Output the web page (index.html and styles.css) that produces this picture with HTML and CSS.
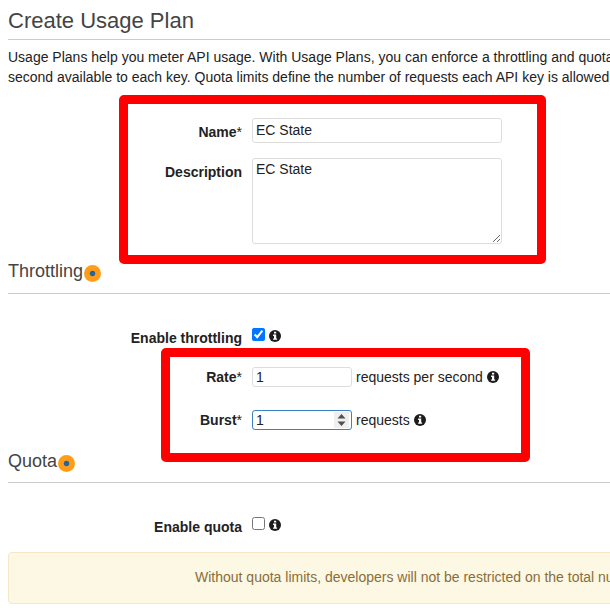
FILE: index.html
```html
<!DOCTYPE html>
<html lang="en">
<head>
<meta charset="utf-8">
<title>Create Usage Plan</title>
<link rel="stylesheet" href="styles.css">
</head>
<body>
<svg class="defs" width="0" height="0" aria-hidden="true">
  <symbol id="info" viewBox="0 0 12 12">
    <circle cx="6" cy="6" r="6" fill="#1c1c1c"/>
    <path d="M5 1.8h2.2v1.7H5zM4.1 4.5h3.1v3.9h.9v1.4H4.1V8.4H5V5.9h-.9z" fill="#fff"/>
  </symbol>
</svg>
<main class="page">
  <h1 class="title">Create Usage Plan</h1>
  <p class="intro">Usage Plans help you meter API usage. With Usage Plans, you can enforce a throttling and quota<br>second available to each key. Quota limits define the number of requests each API key is allowed</p>

  <div class="row row-name">
    <label class="label" for="name">Name<span class="req">*</span></label>
    <input class="field wide" id="name" type="text" value="EC State">
  </div>
  <div class="row row-description">
    <label class="label" for="description">Description</label>
    <textarea class="field area" id="description">EC State</textarea>
  </div>

  <h2 class="section">Throttling<span class="dot"></span></h2>
  <div class="row row-check">
    <label class="label" for="throttle">Enable throttling</label>
    <div class="control"><input class="check" id="throttle" type="checkbox" checked><svg class="info"><use href="#info"/></svg></div>
  </div>
  <div class="row row-rate">
    <label class="label" for="rate">Rate<span class="req">*</span></label>
    <div class="control"><input class="field small" id="rate" type="text" value="1"><span class="unit">requests per second</span><svg class="info"><use href="#info"/></svg></div>
  </div>
  <div class="row row-burst">
    <label class="label" for="burst">Burst<span class="req">*</span></label>
    <div class="control">
      <div class="stepper">
        <input class="field small active" id="burst" type="text" value="1">
        <svg class="spin" viewBox="0 0 15 16"><path d="M3.5 6.5L7.5 2l4 4.5zM3.5 9.5h8l-4 4.5z" fill="#505050"/></svg>
      </div><span class="unit">requests</span><svg class="info"><use href="#info"/></svg>
    </div>
  </div>

  <h2 class="section section-quota">Quota<span class="dot"></span></h2>
  <div class="row row-check">
    <label class="label" for="quota">Enable quota</label>
    <div class="control"><input class="check" id="quota" type="checkbox"><svg class="info"><use href="#info"/></svg></div>
  </div>
  <div class="notice">Without quota limits, developers will not be restricted on the total number</div>

  <div class="mark mark-details"></div>
  <div class="mark mark-limits"></div>
</main>
</body>
</html>
```
FILE: styles.css
```css
* { box-sizing: border-box; }
body {
  margin: 0;
  background: #fff;
  color: #222;
  font: 14px/20px "Liberation Sans", Arial, sans-serif;
}
.defs { position: absolute; }
.page {
  position: relative;
  height: 608px;
  padding-left: 8px;
  overflow: hidden;
}
.title {
  height: 40px;
  margin: 0;
  padding-top: 8px;
  border-bottom: 1px solid #ccc;
  color: #444;
  font-size: 22px;
  font-weight: 400;
  line-height: 25px;
}
.intro {
  height: 78px;
  margin: 0;
  padding-top: 7px;
  white-space: nowrap;
}
.row {
  display: grid;
  grid-template-columns: 234px 1fr;
  column-gap: 10px;
  align-items: start;
}
.row-name { height: 40px; }
.row-description { height: 100px; }
.row-check { height: 73px; padding-top: 34px; }
.row-rate { height: 43px; }
.row-burst { height: 38px; }
.label {
  padding-top: 4px;
  text-align: right;
  font-weight: 700;
}
.row-check .label, .row-rate .label, .row-burst .label { padding-top: 0; }
.req { font-weight: 400; }
.control { display: flex; align-items: center; height: 20px; }
.row-check .control { height: 13px; }
.field {
  margin: 0;
  padding: 0 3px;
  border: 1px solid #ddd;
  border-radius: 3px;
  outline: 0;
  background: #fff;
  color: #222;
  font: inherit;
}
.wide { width: 250px; height: 25px; padding-bottom: 2px; }
.area { width: 250px; height: 86px; resize: both; }
.small { display: block; width: 100px; height: 20px; }
.active { border-color: #3b82c4; }
.stepper { position: relative; }
.spin {
  position: absolute;
  top: 2px;
  right: 3px;
  width: 15px;
  height: 16px;
  background: #efefef;
}
.unit { margin: 0 4px; }
.check { width: 13px; height: 13px; margin: 0 4px 0 0; }
.info { width: 12px; height: 12px; }
.row-check .info { margin-top: 3px; }
.section {
  display: flex;
  height: 36px;
  margin: 0;
  padding-top: 3px;
  border-bottom: 1px solid #ccc;
  color: #444;
  font-size: 18px;
  font-weight: 400;
  line-height: 20px;
}
.section-quota { height: 35px; }
.dot {
  width: 17px;
  height: 17px;
  margin: 4px 0 0 1px;
  border-radius: 50%;
  background: radial-gradient(circle, #2e6391 2.4px, #ff9d18 3.2px);
}
.notice {
  width: 900px;
  height: 52px;
  margin-top: -4px;
  padding: 14px 0 0 186px;
  border: 1px solid #f5e8c6;
  border-radius: 4px;
  background: #fcf8e3;
  color: #8a6d3b;
  white-space: nowrap;
}
.mark {
  position: absolute;
  border: 9px solid #f00;
  border-radius: 5px;
  pointer-events: none;
}
.mark-details { left: 119px; top: 95px; width: 427px; height: 169px; }
.mark-limits { left: 161px; top: 348px; width: 369px; height: 114px; }
```
